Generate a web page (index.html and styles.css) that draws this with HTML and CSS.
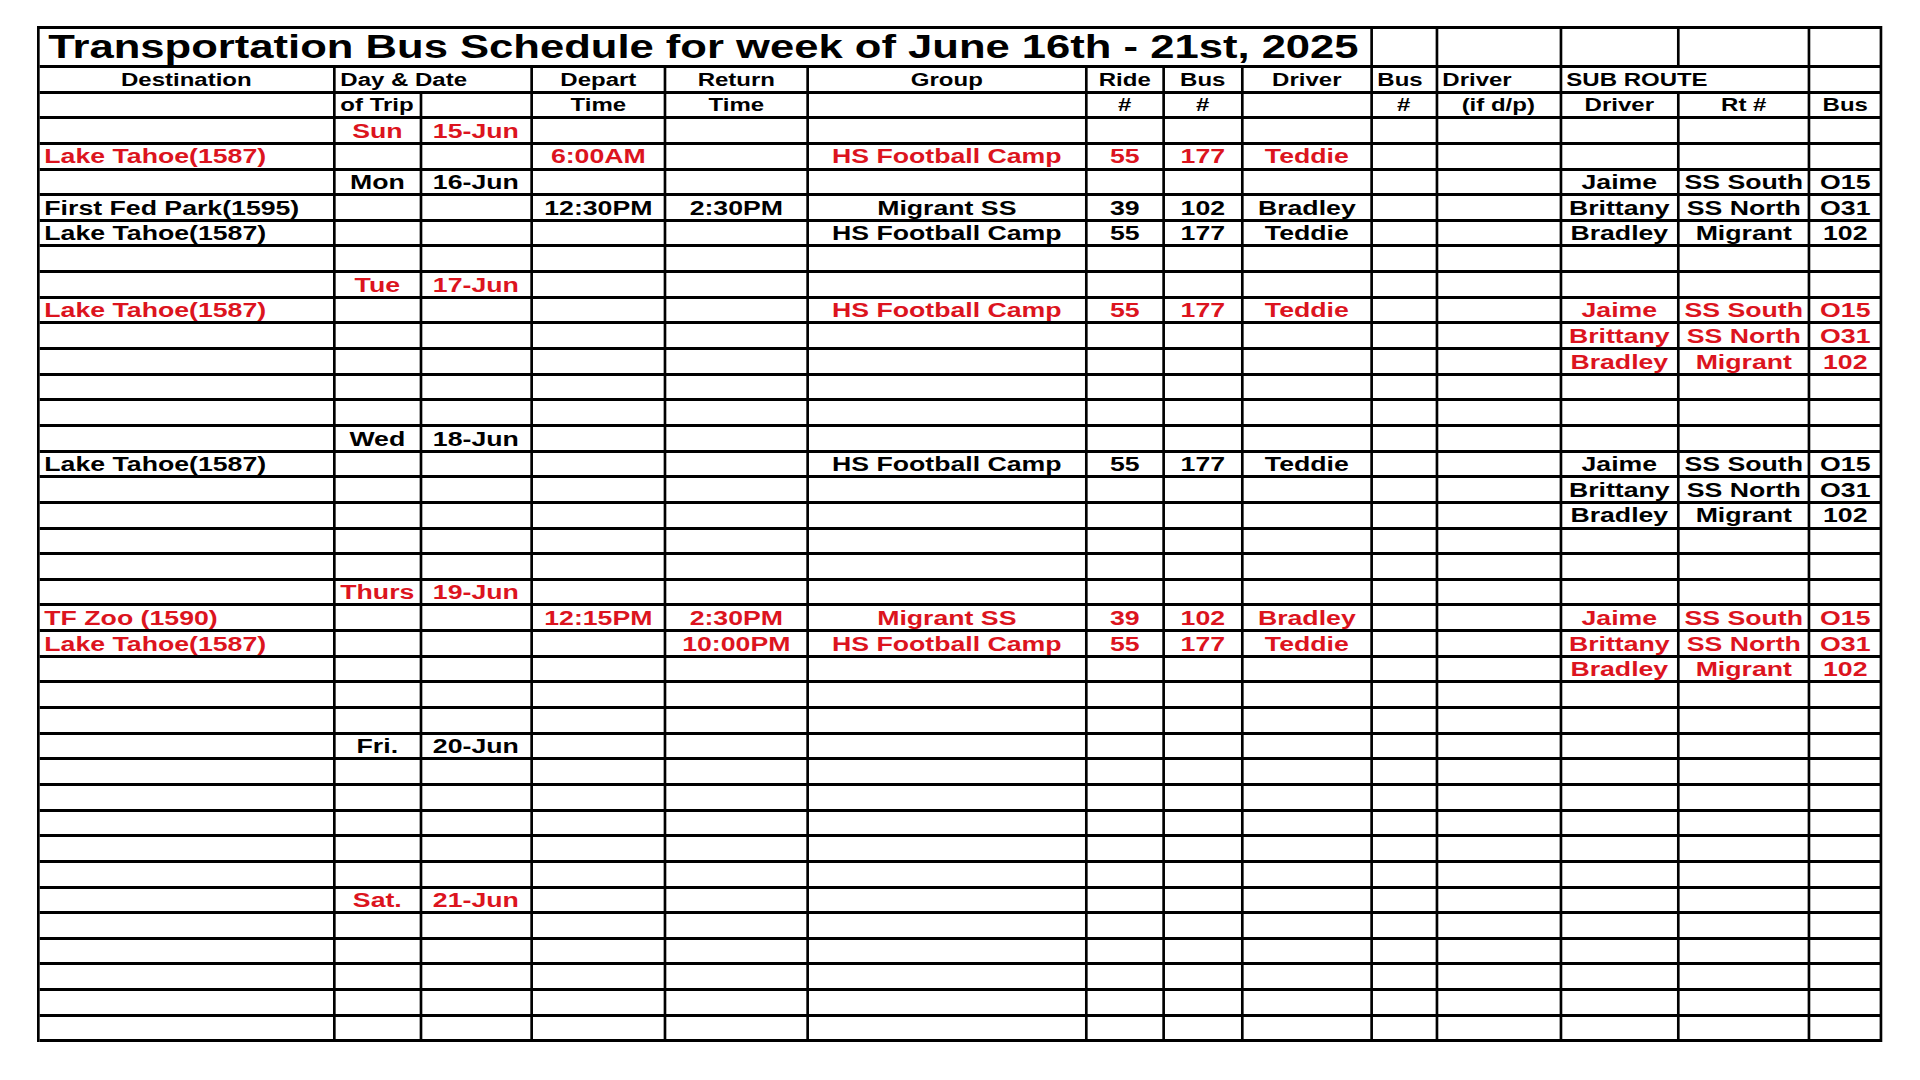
FILE: index.html
```html
<!DOCTYPE html>
<html lang="en">
<head>
<meta charset="utf-8">
<title>Transportation Bus Schedule</title>
<link rel="stylesheet" href="styles.css">
</head>
<body>
<main class="page">
  <section class="sheet">
    <div class="row title">
      <div class="ttl">Transportation Bus Schedule for week of June 16th - 21st, 2025</div>
      <div></div><div></div><div></div><div></div><div></div>
    </div>
    <div class="row hd">
      <div>Destination</div>
      <div class="s2 l">Day &amp; Date</div>
      <div>Depart</div>
      <div>Return</div>
      <div>Group</div>
      <div>Ride</div>
      <div>Bus</div>
      <div>Driver</div>
      <div class="l">Bus</div>
      <div class="l">Driver</div>
      <div class="s2 l">SUB ROUTE</div>
      <div></div>
    </div>
    <div class="row hd">
      <div></div>
      <div class="l">of Trip</div>
      <div></div>
      <div>Time</div>
      <div>Time</div>
      <div></div>
      <div>#</div>
      <div>#</div>
      <div></div>
      <div>#</div>
      <div>(if d/p)</div>
      <div>Driver</div>
      <div>Rt #</div>
      <div>Bus</div>
    </div>

    <div class="row red"><div></div><div>Sun</div><div>15-Jun</div><div></div><div></div><div></div><div></div><div></div><div></div><div></div><div></div><div></div><div></div><div></div></div>
    <div class="row red"><div class="l">Lake Tahoe(1587)</div><div></div><div></div><div>6:00AM</div><div></div><div>HS Football Camp</div><div>55</div><div>177</div><div>Teddie</div><div></div><div></div><div></div><div></div><div></div></div>
    <div class="row"><div></div><div>Mon</div><div>16-Jun</div><div></div><div></div><div></div><div></div><div></div><div></div><div></div><div></div><div>Jaime</div><div>SS South</div><div>O15</div></div>
    <div class="row"><div class="l">First Fed Park(1595)</div><div></div><div></div><div>12:30PM</div><div>2:30PM</div><div>Migrant SS</div><div>39</div><div>102</div><div>Bradley</div><div></div><div></div><div>Brittany</div><div>SS North</div><div>O31</div></div>
    <div class="row"><div class="l">Lake Tahoe(1587)</div><div></div><div></div><div></div><div></div><div>HS Football Camp</div><div>55</div><div>177</div><div>Teddie</div><div></div><div></div><div>Bradley</div><div>Migrant</div><div>102</div></div>
    <div class="row"><div></div><div></div><div></div><div></div><div></div><div></div><div></div><div></div><div></div><div></div><div></div><div></div><div></div><div></div></div>

    <div class="row red"><div></div><div>Tue</div><div>17-Jun</div><div></div><div></div><div></div><div></div><div></div><div></div><div></div><div></div><div></div><div></div><div></div></div>
    <div class="row red"><div class="l">Lake Tahoe(1587)</div><div></div><div></div><div></div><div></div><div>HS Football Camp</div><div>55</div><div>177</div><div>Teddie</div><div></div><div></div><div>Jaime</div><div>SS South</div><div>O15</div></div>
    <div class="row red"><div></div><div></div><div></div><div></div><div></div><div></div><div></div><div></div><div></div><div></div><div></div><div>Brittany</div><div>SS North</div><div>O31</div></div>
    <div class="row red"><div></div><div></div><div></div><div></div><div></div><div></div><div></div><div></div><div></div><div></div><div></div><div>Bradley</div><div>Migrant</div><div>102</div></div>
    <div class="row"><div></div><div></div><div></div><div></div><div></div><div></div><div></div><div></div><div></div><div></div><div></div><div></div><div></div><div></div></div>
    <div class="row"><div></div><div></div><div></div><div></div><div></div><div></div><div></div><div></div><div></div><div></div><div></div><div></div><div></div><div></div></div>

    <div class="row"><div></div><div>Wed</div><div>18-Jun</div><div></div><div></div><div></div><div></div><div></div><div></div><div></div><div></div><div></div><div></div><div></div></div>
    <div class="row"><div class="l">Lake Tahoe(1587)</div><div></div><div></div><div></div><div></div><div>HS Football Camp</div><div>55</div><div>177</div><div>Teddie</div><div></div><div></div><div>Jaime</div><div>SS South</div><div>O15</div></div>
    <div class="row"><div></div><div></div><div></div><div></div><div></div><div></div><div></div><div></div><div></div><div></div><div></div><div>Brittany</div><div>SS North</div><div>O31</div></div>
    <div class="row"><div></div><div></div><div></div><div></div><div></div><div></div><div></div><div></div><div></div><div></div><div></div><div>Bradley</div><div>Migrant</div><div>102</div></div>
    <div class="row"><div></div><div></div><div></div><div></div><div></div><div></div><div></div><div></div><div></div><div></div><div></div><div></div><div></div><div></div></div>
    <div class="row"><div></div><div></div><div></div><div></div><div></div><div></div><div></div><div></div><div></div><div></div><div></div><div></div><div></div><div></div></div>

    <div class="row red"><div></div><div>Thurs</div><div>19-Jun</div><div></div><div></div><div></div><div></div><div></div><div></div><div></div><div></div><div></div><div></div><div></div></div>
    <div class="row red"><div class="l">TF Zoo (1590)</div><div></div><div></div><div>12:15PM</div><div>2:30PM</div><div>Migrant SS</div><div>39</div><div>102</div><div>Bradley</div><div></div><div></div><div>Jaime</div><div>SS South</div><div>O15</div></div>
    <div class="row red"><div class="l">Lake Tahoe(1587)</div><div></div><div></div><div></div><div>10:00PM</div><div>HS Football Camp</div><div>55</div><div>177</div><div>Teddie</div><div></div><div></div><div>Brittany</div><div>SS North</div><div>O31</div></div>
    <div class="row red"><div></div><div></div><div></div><div></div><div></div><div></div><div></div><div></div><div></div><div></div><div></div><div>Bradley</div><div>Migrant</div><div>102</div></div>
    <div class="row"><div></div><div></div><div></div><div></div><div></div><div></div><div></div><div></div><div></div><div></div><div></div><div></div><div></div><div></div></div>
    <div class="row"><div></div><div></div><div></div><div></div><div></div><div></div><div></div><div></div><div></div><div></div><div></div><div></div><div></div><div></div></div>

    <div class="row"><div></div><div>Fri.</div><div>20-Jun</div><div></div><div></div><div></div><div></div><div></div><div></div><div></div><div></div><div></div><div></div><div></div></div>
    <div class="row"><div></div><div></div><div></div><div></div><div></div><div></div><div></div><div></div><div></div><div></div><div></div><div></div><div></div><div></div></div>
    <div class="row"><div></div><div></div><div></div><div></div><div></div><div></div><div></div><div></div><div></div><div></div><div></div><div></div><div></div><div></div></div>
    <div class="row"><div></div><div></div><div></div><div></div><div></div><div></div><div></div><div></div><div></div><div></div><div></div><div></div><div></div><div></div></div>
    <div class="row"><div></div><div></div><div></div><div></div><div></div><div></div><div></div><div></div><div></div><div></div><div></div><div></div><div></div><div></div></div>
    <div class="row"><div></div><div></div><div></div><div></div><div></div><div></div><div></div><div></div><div></div><div></div><div></div><div></div><div></div><div></div></div>

    <div class="row red"><div></div><div>Sat.</div><div>21-Jun</div><div></div><div></div><div></div><div></div><div></div><div></div><div></div><div></div><div></div><div></div><div></div></div>
    <div class="row"><div></div><div></div><div></div><div></div><div></div><div></div><div></div><div></div><div></div><div></div><div></div><div></div><div></div><div></div></div>
    <div class="row"><div></div><div></div><div></div><div></div><div></div><div></div><div></div><div></div><div></div><div></div><div></div><div></div><div></div><div></div></div>
    <div class="row"><div></div><div></div><div></div><div></div><div></div><div></div><div></div><div></div><div></div><div></div><div></div><div></div><div></div><div></div></div>
    <div class="row"><div></div><div></div><div></div><div></div><div></div><div></div><div></div><div></div><div></div><div></div><div></div><div></div><div></div><div></div></div>
    <div class="row"><div></div><div></div><div></div><div></div><div></div><div></div><div></div><div></div><div></div><div></div><div></div><div></div><div></div><div></div></div>
  </section>
</main>
</body>
</html>
```

FILE: styles.css
```css
html, body {
  margin: 0;
  padding: 0;
  background: #ffffff;
}

body {
  font-family: "Liberation Sans", Arial, sans-serif;
  font-weight: bold;
  color: #000000;
}

.page {
  padding: 26px 0 0 37px;
  height: 1080px;
  box-sizing: border-box;
  overflow: hidden;
}

/* The source sheet is printed with horizontally widened type; the whole sheet is stretched */
.sheet {
  --cols: 222px 64.5px 83.25px 100.5px 106.5px 209.25px 57.75px 59.25px 96.75px 48.75px 93px 88.5px 98.25px 54px;
  display: flex;
  flex-direction: column;
  width: max-content;
  border-left: 2px solid #000;
  border-top: 3px solid #000;
  transform: scaleX(1.3333);
  transform-origin: 0 0;
}

.row {
  display: grid;
  grid-template-columns: var(--cols);
  height: 25.65px;
  box-sizing: border-box;
  border-bottom: 3px solid #000;
  font-size: 20px;
}

.row > div {
  display: flex;
  align-items: center;
  justify-content: center;
  border-right: 2px solid #000;
  padding: 0.5px 2px 0;
  white-space: nowrap;
  min-width: 0;
  line-height: 1.1;
}

.row > div.l {
  justify-content: flex-start;
  padding-left: 3.5px;
}

.row > div.s2 {
  grid-column: span 2;
}

.row.title {
  height: 39px;
}

.row.title > div.ttl {
  grid-column: span 9;
  justify-content: flex-start;
  padding-left: 6.5px;
  padding-top: 0;
  font-size: 32.7px;
}

.row.hd {
  font-size: 18px;
}

.row.hd > div {
  padding-top: 2.5px;
}

.row.red {
  color: #dc141e;
}
```
